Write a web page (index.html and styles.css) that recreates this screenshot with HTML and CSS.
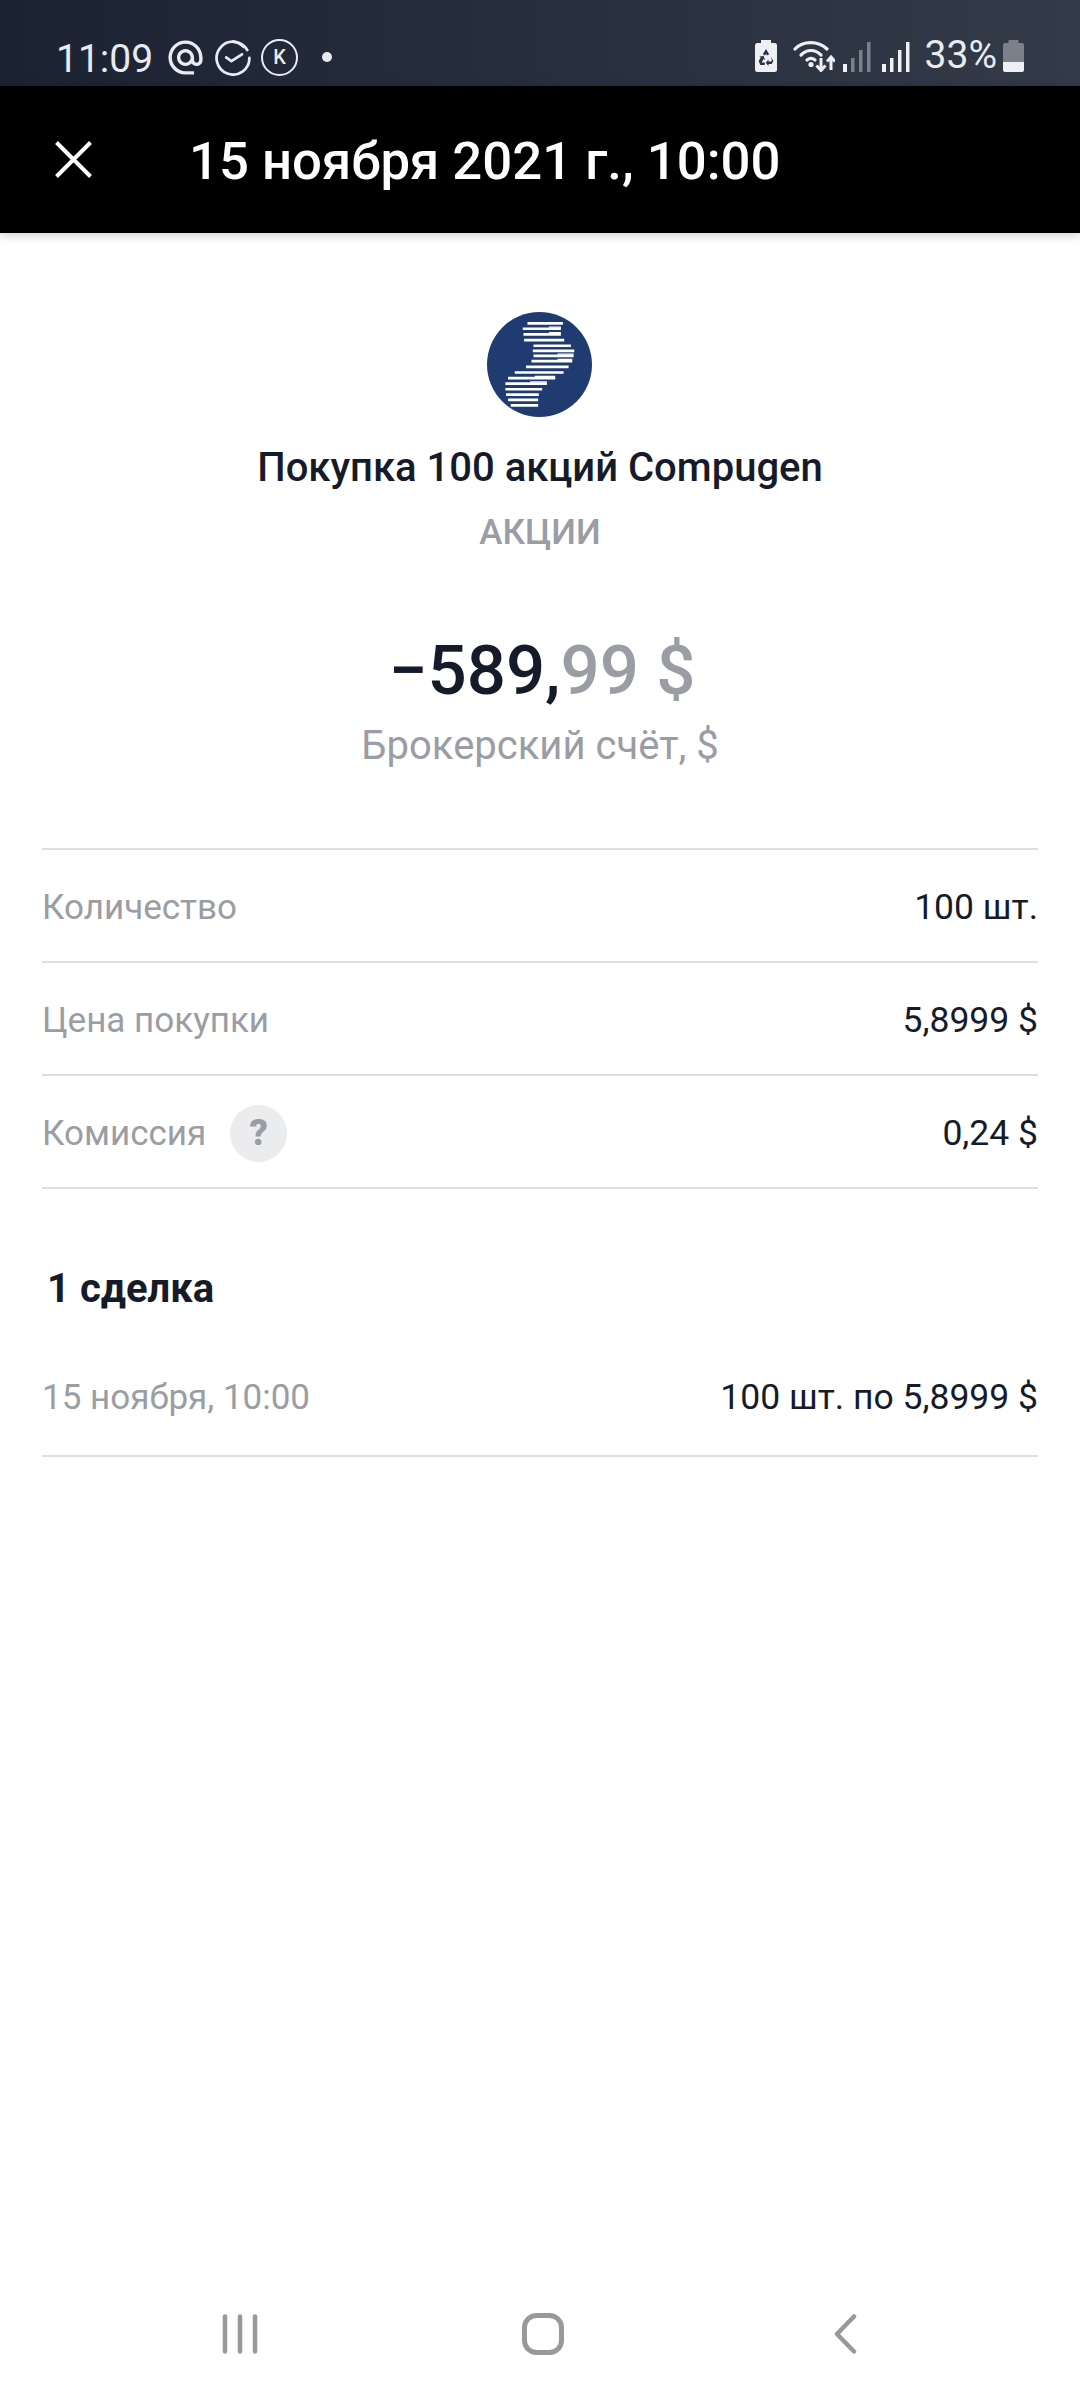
FILE: index.html
```html
<!DOCTYPE html>
<html lang="ru">
<head>
    <meta charset="UTF-8">
    <meta name="viewport" content="width=device-width, initial-scale=1.0">
    <title>Покупка 100 акций Compugen</title>
    <link rel="stylesheet" href="styles.css">
</head>
<body>
    <div class="screen">
        <div class="status-bar">
            <span class="time">11:09</span>
            <svg class="ic-at" viewBox="0 0 24 24"><path fill="#e8ebf0" d="M12 2C6.48 2 2 6.48 2 12s4.48 10 10 10h5v-2h-5c-4.34 0-8-3.66-8-8s3.66-8 8-8 8 3.66 8 8v1.43c0 .79-.71 1.57-1.5 1.57s-1.5-.78-1.5-1.57V12c0-2.76-2.24-5-5-5s-5 2.24-5 5 2.24 5 5 5c1.38 0 2.64-.56 3.54-1.47.65.89 1.77 1.47 2.96 1.47 1.97 0 3.5-1.6 3.5-3.57V12c0-5.52-4.48-10-10-10zm0 13c-1.66 0-3-1.34-3-3s1.34-3 3-3 3 1.34 3 3-1.34 3-3 3z"/></svg>
            <svg class="ic-check" viewBox="0 0 34 34" fill="none" stroke="#e8ebf0" stroke-width="2.6" stroke-linecap="round" stroke-linejoin="round"><path d="M30.5 9.5A15.5 15.5 0 1 0 32.5 17"/><path d="M27 6.5A15.5 15.5 0 0 0 17 1.5"/><path d="M10.5 16.5l5 3.5 10-6.5"/></svg>
            <span class="ic-k">K</span>
            <span class="dot"></span>
            <div class="status-right">
                <svg class="ic-saver" viewBox="0 0 22 32"><path fill="#eef0f4" d="M6 0h10v3h3.500a2.500 2.500 0 0 1 2.500 2.500V29.500a2.500 2.500 0 0 1-2.500 2.500H2.500A2.500 2.500 0 0 1 0 29.500V5.500A2.500 2.500 0 0 1 2.500 3H6z"/><path fill="#2b3240" d="M11 9l3.200 5.200-2.200 1.300-1-1.700-1 1.700-2.200-1.300zM15.500 16l2.800 5-1.600 3h-3.200v2l-2.700-3.200 2.700-3.200v2h2.700l.7-1.500zM3.700 21l2.100-3.600-1.500-.9 4.300-.4 1.500 3.900-1.500-.9-2 3.300h3.200v2.700H5.300z"/></svg>
                <svg class="ic-wifi" viewBox="0 0 42 32" fill="none" stroke="#eef0f4" stroke-linecap="round"><path stroke-width="3.200" d="M2 9C10 .5 25 .5 34 9"/><path stroke-width="3.200" d="M8 15C14 9 22 9 28 15"/><path stroke-width="3.200" d="M14 20c2.500-2 5.500-2 8 0"/><circle cx="18" cy="24.500" r="2.600" fill="#eef0f4" stroke="none"/><path stroke-width="3" stroke-linecap="butt" d="M28 18v12M23.500 25.500l4.500 5 4.500-5M38 30V17M34 21.500l4-4.500 4 4.500"/></svg>
                <svg class="ic-signal" viewBox="0 0 28 30" fill="#7b808a"><rect x="0" y="22" width="4" height="8" fill="#eef0f4"/><rect x="8" y="16" width="3.500" height="14"/><rect x="16" y="8" width="3.500" height="22"/><rect x="24" y="0" width="3.500" height="30"/></svg>
                <svg class="ic-signal ic-signal-2" viewBox="0 0 28 30" fill="#eef0f4"><rect x="0" y="22" width="4" height="8"/><rect x="8" y="16" width="3.500" height="14"/><rect x="16" y="8" width="3.500" height="22"/><rect x="24" y="0" width="3.500" height="30"/></svg>
                <span class="percent">33%</span>
                <svg class="ic-battery" viewBox="0 0 21 32"><path fill="#7b808a" d="M5.500 0h10v3h3.500a2 2 0 0 1 2 2v17H0V5a2 2 0 0 1 2-2h3.500z"/><path fill="#eef0f4" d="M0 22h21v8a2 2 0 0 1-2 2H2a2 2 0 0 1-2-2z"/></svg>
            </div>
        </div>

        <div class="top-bar">
            <svg class="ic-close" viewBox="0 0 37 37" fill="none" stroke="#fff" stroke-width="4"><path d="M1.500 1.500l34 34M35.500 1.500l-34 34"/></svg>
            <h1>15 ноября 2021 г., 10:00</h1>
        </div>

        <div class="content">
            <div class="hero">
                <svg class="logo" viewBox="141 66 314 314">
                    <circle cx="298" cy="223" r="157" fill="#1f3b6f"/>
                    <g stroke="#fff" stroke-width="8">
                        <path d="M262 100h106M248 116h114M250 133h112M252 150h120M280 167h112M278 182h124M280 197h120M274 213h122M258 230h127M224 247h146M204 264h141M196 280h124M196 297h110M198 313h98M204 329h90M212 345h82"/>
                        <path stroke-width="4" d="M326 111h36M326 128h36M352 192h48M352 208h44M284 259h61M270 275h50"/>
                    </g>
                </svg>
                <div class="hero-title">Покупка 100 акций Compugen</div>
                <div class="hero-tag">АКЦИИ</div>
                <div class="amount">−589,<span class="amount-cents">99 $</span></div>
                <div class="account">Брокерский счёт, $</div>
            </div>

            <div class="rows">
                <div class="row">
                    <span class="label">Количество</span>
                    <span class="value">100 шт.</span>
                </div>
                <div class="row">
                    <span class="label">Цена покупки</span>
                    <span class="value">5,8999 $</span>
                </div>
                <div class="row">
                    <span class="label">Комиссия <span class="help">?</span></span>
                    <span class="value">0,24 $</span>
                </div>
            </div>

            <h2>1 сделка</h2>
            <div class="row row-deal">
                <span class="label">15 ноября, 10:00</span>
                <span class="value">100 шт. по 5,8999 $</span>
            </div>
        </div>

        <div class="nav-bar">
            <svg class="ic-recents" viewBox="0 0 36 40" fill="none" stroke="#999" stroke-width="4.500" stroke-linecap="round"><path d="M3 2.500v35M18 2.500v35M33 2.500v35"/></svg>
            <svg class="ic-home" viewBox="0 0 42 42" fill="none" stroke="#999" stroke-width="5"><rect x="2.500" y="2.500" width="37" height="37" rx="12"/></svg>
            <svg class="ic-back" viewBox="0 0 24 40" fill="none" stroke="#999" stroke-width="4.500" stroke-linecap="round" stroke-linejoin="round"><path d="M20 2.500L3 20l17 17.500"/></svg>
        </div>
    </div>
</body>
</html>
```

FILE: styles.css
```css
* {
    box-sizing: border-box;
}
body {
    margin: 0;
    font-family: Roboto, "Noto Sans", sans-serif;
    background-color: #fff;
    color: #151b28;
}
.screen {
    display: flex;
    flex-direction: column;
    height: 2400px;
}

/* status bar */
.status-bar {
    display: flex;
    align-items: flex-start;
    height: 86px;
    padding: 0 56px 0 56px;
    background: linear-gradient(90deg, #1b2333, #333a48);
    color: #e8ebf0;
}
.time {
    font-size: 39px;
    line-height: 46px;
    margin-top: 36px;
}
.ic-at {
    width: 41px;
    height: 41px;
    margin: 37px 0 0 12px;
}
.ic-check {
    width: 36px;
    height: 36px;
    margin: 40px 0 0 9px;
}
.ic-k {
    width: 37px;
    height: 37px;
    margin: 39px 0 0 10px;
    border: 2.500px solid #e8ebf0;
    border-radius: 50%;
    font-size: 20px;
    font-weight: 500;
    line-height: 32px;
    text-align: center;
}
.dot {
    width: 10px;
    height: 10px;
    margin: 52px 0 0 24px;
    border-radius: 50%;
    background: #e8ebf0;
}
.status-right {
    display: flex;
    align-items: flex-end;
    height: 32px;
    margin: 40px 0 0 auto;
}
.ic-saver {
    width: 22px;
    height: 32px;
}
.ic-wifi {
    width: 42px;
    height: 32px;
    margin-left: 16px;
}
.ic-signal {
    width: 28px;
    height: 30px;
    margin-left: 8px;
}
.ic-signal-2 {
    margin-left: 11px;
}
.percent {
    font-size: 39px;
    line-height: 34px;
    margin-left: 15px;
}
.ic-battery {
    width: 21px;
    height: 32px;
    margin-left: 6px;
}

/* top bar */
.top-bar {
    display: flex;
    align-items: center;
    height: 147px;
    padding-left: 55px;
    background: #000;
    color: #fff;
    box-shadow: 0 2px 10px rgba(0, 0, 0, 0.2);
}
.ic-close {
    width: 37px;
    height: 37px;
}
h1 {
    margin: 2px 0 0 97px;
    font-size: 52.7px;
    font-weight: 500;
}

/* content */
.content {
    padding: 79px 42px 0;
}
.hero {
    display: flex;
    flex-direction: column;
    align-items: center;
    text-align: center;
}
.logo {
    width: 105px;
    height: 105px;
    margin-right: 2px;
}
.hero-title {
    margin-top: 26px;
    font-size: 40px;
    font-weight: 500;
    line-height: 50px;
}
.hero-tag {
    margin-top: 20px;
    font-size: 35px;
    font-weight: 500;
    line-height: 40px;
    color: #9a9da3;
}
.amount {
    margin: 74px 0 0 4px;
    font-size: 69px;
    font-weight: 500;
    line-height: 88px;
}
.amount-cents {
    color: #9a9da3;
}
.account {
    margin-top: 8px;
    font-size: 40px;
    line-height: 46px;
    color: #9a9da3;
}
.rows {
    margin-top: 79px;
    border-top: 2px solid #dcdee0;
}
.row {
    display: flex;
    align-items: center;
    justify-content: space-between;
    height: 113px;
    padding-top: 3px;
    border-bottom: 2px solid #dcdee0;
    font-size: 35px;
}
.label {
    display: flex;
    align-items: center;
    color: #9a9da3;
}
.value {
    font-size: 35.5px;
    color: #151b28;
}
.help {
    width: 57px;
    height: 57px;
    margin-left: 24px;
    border-radius: 50%;
    background: #eaecee;
    font-size: 36px;
    font-weight: 900;
    line-height: 57px;
    text-align: center;
    color: #9a9da3;
}
h2 {
    margin: 75px 0 22px 5px;
    font-size: 40px;
    font-weight: 700;
    line-height: 50px;
}
.row-deal {
    height: 121px;
}

/* nav bar */
.nav-bar {
    display: flex;
    align-items: center;
    height: 42px;
    margin-top: auto;
    margin-bottom: 45px;
    padding-left: 222px;
}
.ic-recents {
    width: 36px;
    height: 40px;
}
.ic-home {
    width: 42px;
    height: 42px;
    margin-left: 264px;
}
.ic-back {
    width: 24px;
    height: 40px;
    margin-left: 270px;
}
```
